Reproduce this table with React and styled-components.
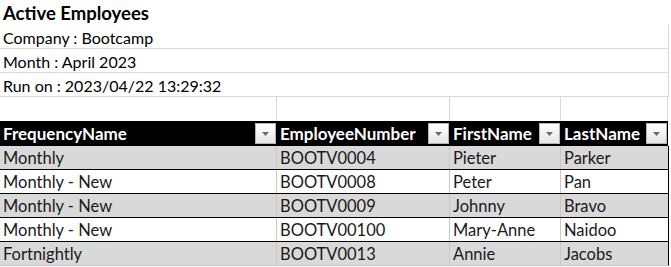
import React from 'react';
import styled, { createGlobalStyle } from 'styled-components';

const columns = [
  { key: 'freq', title: 'FrequencyName', width: 277 },
  { key: 'num', title: 'EmployeeNumber', width: 173 },
  { key: 'first', title: 'FirstName', width: 111 },
  { key: 'last', title: 'LastName', width: 107 },
];

const rows = [
  ['Monthly', 'BOOTV0004', 'Pieter', 'Parker'],
  ['Monthly - New', 'BOOTV0008', 'Peter', 'Pan'],
  ['Monthly - New', 'BOOTV0009', 'Johnny', 'Bravo'],
  ['Monthly - New', 'BOOTV00100', 'Mary-Anne', 'Naidoo'],
  ['Fortnightly', 'BOOTV0013', 'Annie', 'Jacobs'],
];

const info = ['Company : Bootcamp', 'Month : April 2023', 'Run on : 2023/04/22 13:29:32'];

function FilterButton() {
  return (
    <Filter>
      <svg width="7" height="4" viewBox="0 0 7 4">
        <path d="M0 0 H7 L3.5 4 Z" fill="#6b6b6b" />
      </svg>
    </Filter>
  );
}

function App() {
  return (
    <>
      <GlobalStyle />
      <Sheet>
        <Title>Active Employees</Title>
        {info.map((line) => (
          <InfoRow key={line}>{line}</InfoRow>
        ))}
        <Row>
          {columns.map((c) => (
            <BlankCell key={c.key} $w={c.width} />
          ))}
        </Row>
        <HeaderRow>
          {columns.map((c) => (
            <HeaderCell key={c.key} $w={c.width}>
              <span>{c.title}</span>
              <FilterButton />
            </HeaderCell>
          ))}
        </HeaderRow>
        {rows.map((r, i) => (
          <DataRow key={i} $shaded={i % 2 === 0}>
            {r.map((value, j) => (
              <DataCell key={j} $w={columns[j].width}>
                {value}
              </DataCell>
            ))}
          </DataRow>
        ))}
      </Sheet>
    </>
  );
}

const GlobalStyle = createGlobalStyle`
  body {
    margin: 0;
    background: #fff;
    font-family: Lato, "Open Sans", sans-serif;
  }
`;

const Sheet = styled.div`
  width: 671px;
  display: flex;
  flex-direction: column;
  color: #000;
  font-size: 16px;
`;

const Title = styled.div`
  height: 25px;
  padding: 1px 0 0 3px;
  box-sizing: border-box;
  font-size: 18.5px;
  font-weight: 700;
  line-height: 24px;
`;

const InfoRow = styled.div`
  height: 24px;
  width: 669px;
  box-sizing: border-box;
  padding: 2px 0 0 3px;
  line-height: 21px;
  border-bottom: 1px solid #dadada;
  border-right: 1px solid #dadada;
  white-space: nowrap;
`;

const Row = styled.div`
  display: flex;
  height: 24px;
`;

const BlankCell = styled.div`
  width: ${(p) => p.$w}px;
  flex: none;
  box-sizing: border-box;
  border-right: 1px solid #dadada;
`;

const HeaderRow = styled.div`
  display: flex;
  height: 25px;
  width: 668px;
  background: #000;
`;

const HeaderCell = styled.div`
  width: ${(p) => p.$w}px;
  flex: none;
  box-sizing: border-box;
  display: flex;
  align-items: center;
  justify-content: space-between;
  padding: 0 1px 0 3px;
  color: #fff;
  font-size: 17px;
  font-weight: 700;
  white-space: nowrap;
`;

const Filter = styled.div`
  width: 21px;
  height: 21px;
  box-sizing: border-box;
  border: 1px solid #b5b5b5;
  background: linear-gradient(#ffffff, #e6e6e6);
  display: flex;
  align-items: center;
  justify-content: center;
`;

const DataRow = styled.div`
  display: flex;
  height: 24px;
  width: 669px;
  box-sizing: border-box;
  background: ${(p) => (p.$shaded ? '#d9d9d9' : '#fff')};
  border-bottom: 1px solid #000;
  border-right: 1px solid #000;

  &:last-child {
    border-bottom-color: #c8c8c8;
  }
`;

const DataCell = styled.div`
  width: ${(p) => p.$w}px;
  flex: none;
  box-sizing: border-box;
  padding: 2px 0 0 3px;
  font-size: 16.5px;
  line-height: 21px;
  color: #1a1a1a;
  white-space: nowrap;
  border-right: 1px solid #c8c8c8;

  &:last-child {
    border-right: none;
  }
`;

export default App;
